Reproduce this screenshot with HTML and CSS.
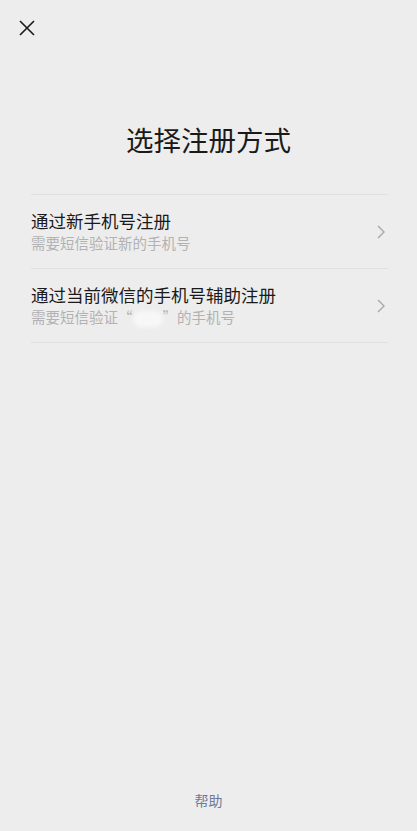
FILE: index.html
```html
<!DOCTYPE html>
<html lang="zh">
<head>
<meta charset="utf-8">
<title>选择注册方式</title>
<link rel="stylesheet" href="styles.css">
</head>
<body>
<div class="page">
  <div class="topbar">
    <svg class="close" width="16" height="16" viewBox="0 0 16 16"><path d="M1 1L15 15M15 1L1 15" stroke="#1a1a1a" stroke-width="1.6" fill="none"/></svg>
  </div>
  <h1 class="title">选择注册方式</h1>
  <ul class="list">
    <li class="item">
      <div class="text">
        <div class="item-title">通过新手机号注册</div>
        <div class="item-sub">需要短信验证新的手机号</div>
      </div>
      <svg class="chev" width="8" height="14" viewBox="0 0 8 14"><path d="M1 1L7 7L1 13" stroke="#a8a8a8" stroke-width="1.4" fill="none"/></svg>
    </li>
    <li class="item">
      <div class="text">
        <div class="item-title">通过当前微信的手机号辅助注册</div>
        <div class="item-sub">需要短信验证“<span class="blur">&nbsp;</span>”的手机号</div>
      </div>
      <svg class="chev" width="8" height="14" viewBox="0 0 8 14"><path d="M1 1L7 7L1 13" stroke="#a8a8a8" stroke-width="1.4" fill="none"/></svg>
    </li>
  </ul>
  <div class="spacer"></div>
  <div class="help">帮助</div>
</div>
</body>
</html>
```
FILE: styles.css
```css
html, body {
  margin: 0;
  padding: 0;
  background: #ededed;
}
body {
  font-family: "Noto Sans CJK SC", "Noto Sans", sans-serif;
  color: #1a1a1a;
}
.page {
  height: 831px;
  display: flex;
  flex-direction: column;
}
.topbar {
  padding: 20px 0 0 19px;
  height: 16px;
}
.close {
  display: block;
}
.title {
  margin: 83px 0 0;
  font-size: 27.5px;
  font-weight: 400;
  line-height: 40px;
  text-align: center;
  color: #1a1a1a;
}
.list {
  list-style: none;
  margin: 35px 29px 0 31px;
  padding: 0;
  border-top: 1px solid #e0e0e0;
}
.item {
  display: flex;
  align-items: center;
  justify-content: space-between;
  border-bottom: 1px solid #e0e0e0;
  padding: 14px 3px 14px 0;
}
.item-title {
  font-size: 17.5px;
  line-height: 23px;
  color: #1a1a1a;
}
.item-sub {
  font-size: 14.5px;
  line-height: 22px;
  color: #b2b2b2;
}
.blur {
  display: inline-block;
  width: 30px;
  height: 16px;
  vertical-align: middle;
  background: #f7f7f7;
  border-radius: 8px;
  filter: blur(2px);
}
.chev {
  display: block;
}
.spacer {
  flex: 1;
}
.help {
  text-align: center;
  font-size: 14px;
  line-height: 20px;
  color: #6d7a9b;
  padding-bottom: 21px;
}
```
